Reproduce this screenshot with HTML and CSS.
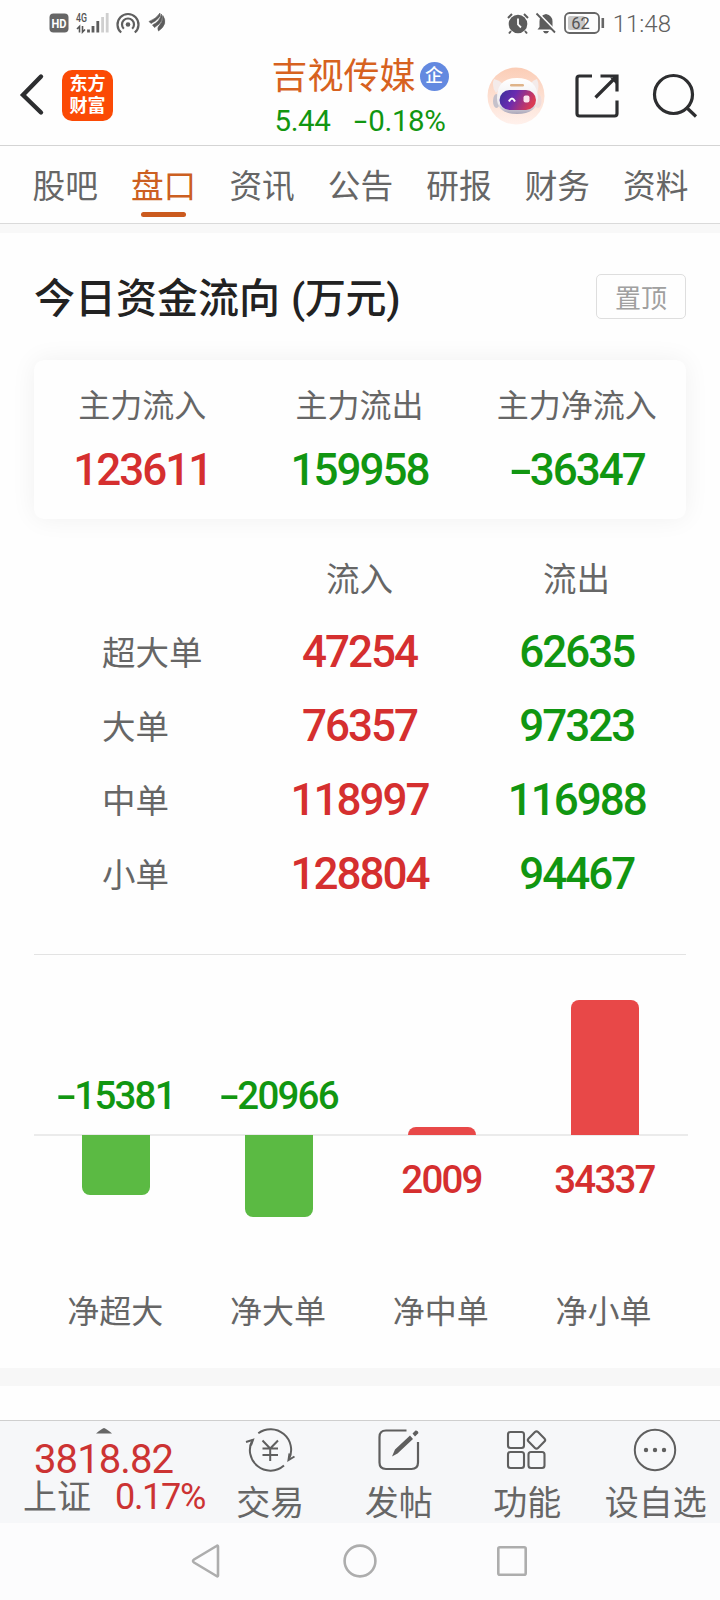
FILE: index.html
```html
<!DOCTYPE html>
<html lang="zh-CN">
<head>
<meta charset="utf-8">
<title>吉视传媒 - 盘口</title>
<link rel="stylesheet" href="styles.css">
</head>
<body>
<div class="app">
  <div class="statusbar">
    <div class="status-left">
      <svg class="ic-hd" width="20" height="20" viewBox="0 0 20 20"><rect x="0.5" y="0.5" width="19" height="19" rx="4" fill="#666"/><text x="10" y="14.5" text-anchor="middle" font-size="12" font-weight="700" textLength="15" lengthAdjust="spacingAndGlyphs" fill="#fff">HD</text></svg>
      <svg class="ic-signal" width="34" height="22" viewBox="0 0 34 22"><text x="0" y="9.500" font-size="12" font-weight="500" textLength="11" lengthAdjust="spacingAndGlyphs" fill="#555">4G</text><path d="M3.500 20.500V14.500L1 17M6.500 14V20L9 17.500" fill="none" stroke="#555" stroke-width="1.600"/><path d="M12.500 17.500v3M17 14v6.500M21.800 9v11.500" stroke="#5c5c5c" stroke-width="2.800"/><path d="M26.600 5v15.500M31.200 1v19.500" stroke="#cfcfcf" stroke-width="2.800"/></svg>
      <svg class="ic-hot" width="24" height="22" viewBox="0 0 24 22"><g fill="none" stroke="#5f5f5f" stroke-width="2.200"><path d="M5.200 20.500A10.500 10.500 0 1 1 18.800 20.500"/><path d="M7.800 16.800A6 6 0 1 1 16.200 16.800"/></g><circle cx="12" cy="12.500" r="2.300" fill="#5f5f5f"/></svg>
      <svg class="ic-wing" width="17" height="19" viewBox="0 0 17 19"><path d="M0 8.500Q7 6 11 0Q12.500 5 2 10.500ZM3.500 12Q11 8.500 12.300 1Q16 8 5.500 14.500ZM9.500 18Q7.500 15 11 11.500Q14 8 13.800 2.500Q19.500 11 9.500 18Z" fill="#5c5c5c" stroke="#5c5c5c" stroke-width="0.600"/></svg>
    </div>
    <div class="status-right">
      <svg width="22" height="21" viewBox="0 0 22 21"><circle cx="11" cy="11" r="9.300" fill="#5c5c5c"/><path d="M1 5L5 1M17 1l4 4M4 18l-2 2.500M18 18l2 2.500" stroke="#5c5c5c" stroke-width="2"/><path d="M11 5.500V11.500L14 14.500" fill="none" stroke="#fff" stroke-width="1.800"/></svg>
      <svg class="ic-bell" width="20" height="22" viewBox="0 0 20 22"><path d="M1.500 17.500L3.500 15V9.500Q3.500 3.500 10 2Q16.500 3.500 16.500 9.500V15L18.500 17.500ZM7 19h6q-1 2.500-3 2.500T7 19Z" fill="#5c5c5c"/><path d="M1.500 0.500L20 19.500" stroke="#fff" stroke-width="2"/><path d="M0.500 1.500L19 20.500" stroke="#5c5c5c" stroke-width="1.800"/></svg>
      <svg class="ic-bat" width="41" height="22" viewBox="0 0 41 22"><rect x="1" y="1" width="34" height="20" rx="4.500" fill="none" stroke="#666" stroke-width="1.800"/><rect x="4" y="4" width="17" height="14" rx="2" fill="#c9c9c9"/><path d="M38.800 6v10" stroke="#666" stroke-width="2.600"/><text x="16.500" y="16.700" text-anchor="middle" font-size="16.500" fill="#555">62</text></svg>
      <span class="clock">11:48</span>
    </div>
  </div>

  <header class="header">
    <div class="head-left">
      <svg width="24" height="42" viewBox="0 0 24 42"><path d="M21 2.500L3 21L21 38.500" fill="none" stroke="#2d2e30" stroke-width="4.400" stroke-linecap="round"/></svg>
      <div class="logo">东方<br>财富</div>
    </div>
    <div class="stock">
      <div class="stock-name">吉视传媒<span class="badge">企</span></div>
      <div class="stock-price"><span>5.44</span><span><i class="minus">-</i>0.18%</span></div>
    </div>
    <div class="head-right">
      <svg class="robot" width="58" height="58" viewBox="0 0 58 58">
        <defs>
          <linearGradient id="halo" x1="0" y1="0" x2="0" y2="1"><stop offset="0" stop-color="#fbcdb6"/><stop offset="1" stop-color="#fff1ec"/></linearGradient>
          <linearGradient id="visor" x1="0" y1="0" x2="1" y2="0.300"><stop offset="0" stop-color="#38309a"/><stop offset="0.450" stop-color="#6a2bb0"/><stop offset="1" stop-color="#d93a55"/></linearGradient>
          <linearGradient id="shell" x1="0" y1="0" x2="0" y2="1"><stop offset="0" stop-color="#fff"/><stop offset="0.700" stop-color="#eeecf0"/><stop offset="1" stop-color="#aaa6b8"/></linearGradient>
        </defs>
        <circle cx="29" cy="29" r="28.500" fill="url(#halo)"/>
        <path d="M7 12q5 1 9 5l-7 9q-5-7-2-14ZM50 12q-4 1-7 5l7 9q3-7 0-14Z" fill="#f4ebea"/>
        <ellipse cx="9.500" cy="34" rx="3.500" ry="7" fill="#c5c1cb"/><ellipse cx="51" cy="34" rx="3.500" ry="7" fill="#efdcdc"/>
        <path d="M10 31Q10 11 30 11T51 31Q50 47 30 47T10 31Z" fill="url(#shell)"/>
        <rect x="23" y="17" width="14" height="2.600" rx="1.300" fill="#dfb48a"/>
        <rect x="12.500" y="23" width="36.500" height="20" rx="10" fill="url(#visor)"/>
        <path d="M22 34.500q3-6 6 0" fill="none" stroke="#fff" stroke-width="2"/><rect x="36.500" y="28.500" width="6" height="7" rx="2" fill="#fbe3ee"/>
      </svg>
      <svg class="share" width="44" height="44" viewBox="0 0 44 44"><g fill="none" stroke="#2d2e30" stroke-width="3.200"><path d="M17 2H4.500Q2 2 2 4.500V39.500Q2 42 4.500 42H39.500Q42 42 42 39.500V26.500"/><path d="M25.500 2H42V17.500M41 3L20.500 23.500"/></g><path d="M35 3.500H41V10Z" fill="#2d2e30"/></svg>
      <svg class="search" width="46" height="46" viewBox="0 0 46 46"><g fill="none" stroke="#2d2e30" stroke-width="3.200"><circle cx="21.500" cy="21.500" r="19"/><path d="M34.500 34.500L44 43.500"/></g></svg>
    </div>
  </header>

  <nav class="tabs">
    <span class="tab">股吧</span><span class="tab active">盘口</span><span class="tab">资讯</span><span class="tab">公告</span><span class="tab">研报</span><span class="tab">财务</span><span class="tab">资料</span>
  </nav>

  <main class="panel">
    <div class="panel-head">
      <h1>今日资金流向<span class="unit">(万元)</span></h1>
      <button class="pin">置顶</button>
    </div>
    <section class="summary">
      <div><span class="label">主力流入</span><span class="num up">123611</span></div>
      <div><span class="label">主力流出</span><span class="num down">159958</span></div>
      <div><span class="label">主力净流入</span><span class="num down"><i class="minus">-</i>36347</span></div>
    </section>
    <section class="flows">
      <div class="row row-head"><span></span><span>流入</span><span>流出</span></div>
      <div class="row"><span class="name">超大单</span><span class="num up">47254</span><span class="num down">62635</span></div>
      <div class="row"><span class="name">大单</span><span class="num up">76357</span><span class="num down">97323</span></div>
      <div class="row"><span class="name">中单</span><span class="num up">118997</span><span class="num down">116988</span></div>
      <div class="row"><span class="name">小单</span><span class="num up">128804</span><span class="num down">94467</span></div>
    </section>
    <section class="chart">
      <div class="plot">
        <div class="col neg"><span class="val down"><i class="minus">-</i>15381</span><div class="bar" style="height:60px"></div></div>
        <div class="col neg"><span class="val down"><i class="minus">-</i>20966</span><div class="bar" style="height:82px"></div></div>
        <div class="col pos"><div class="bar" style="height:8px"></div><span class="val up">2009</span></div>
        <div class="col pos"><div class="bar" style="height:135px"></div><span class="val up">34337</span></div>
      </div>
      <div class="names"><span>净超大</span><span>净大单</span><span>净中单</span><span>净小单</span></div>
    </section>
  </main>

  <footer class="toolbar">
    <div class="index">
      <svg class="caret" width="16" height="6" viewBox="0 0 16 6"><path d="M0 5.500Q5 1 8 0Q11 1 16 5.500Z" fill="#666"/></svg>
      <div class="index-val">3818.82</div>
      <div class="index-row"><span>上证</span><span class="pct">0.17%</span></div>
    </div>
    <div class="tool">
      <svg width="50" height="44" viewBox="0 0 50 44"><g fill="none" stroke="#5f5f5f" stroke-width="2"><path d="M13.300 5.300A20.600 20.600 0 0 1 44 31M39 37.600A20.600 20.600 0 0 1 7.500 12"/><path d="M1 14L8 11.800L6 17.500M44.500 25.500L43.500 32L49.500 28.500"/><path d="M17.500 12.500L25.200 20.500L33 12.500M17.500 20.500H33M17.500 27H33M25.200 20.500V33"/></g></svg>
      <span>交易</span></div>
    <div class="tool">
      <svg width="44" height="44" viewBox="0 0 44 44"><path d="M29.500 2.500H9Q2.500 2.500 2.500 9V34.500Q2.500 41 9 41H34.500Q41 41 41 34.500V14" fill="none" stroke="#5f5f5f" stroke-width="2.200"/><path d="M15 28.500L18 21.500L33 7.500L36 11L20.500 25.500ZM35.500 5.500L38.500 2.500Q41 2 41.500 5L38 8.500Z" fill="#5f5f5f"/></svg>
      <span>发帖</span></div>
    <div class="tool">
      <svg width="44" height="44" viewBox="0 0 44 44"><g fill="none" stroke="#5f5f5f" stroke-width="2.100"><rect x="3" y="4" width="16" height="16" rx="2.500"/><rect x="3" y="24" width="16" height="16" rx="2.500"/><rect x="23.500" y="24" width="16" height="16" rx="2.500"/><rect x="-6.700" y="-6.700" width="13.400" height="13.400" rx="2.200" transform="translate(31.500 12) rotate(45)"/></g></svg>
      <span>功能</span></div>
    <div class="tool">
      <svg width="44" height="44" viewBox="0 0 44 44"><circle cx="21" cy="22" r="20.200" fill="none" stroke="#5f5f5f" stroke-width="2"/><g fill="#5f5f5f"><circle cx="12" cy="22" r="2.200"/><circle cx="21" cy="22" r="2.200"/><circle cx="30" cy="22" r="2.200"/></g></svg>
      <span>设自选</span></div>
  </footer>

  <div class="sysnav">
    <svg width="30" height="34" viewBox="0 0 30 34"><path d="M27 2.500V31.500Q27 33 25.500 32L3 18.500Q1 17 3 15.500L25.500 2Q27 1 27 2.500Z" fill="none" stroke="#adadad" stroke-width="2.600"/></svg>
    <svg width="34" height="34" viewBox="0 0 34 34"><circle cx="17" cy="17" r="15.400" fill="none" stroke="#adadad" stroke-width="2.600"/></svg>
    <svg width="30" height="30" viewBox="0 0 30 30"><rect x="1.300" y="1.300" width="27.400" height="27.400" rx="1.500" fill="none" stroke="#adadad" stroke-width="2.600"/></svg>
  </div>
</div>
</body>
</html>
```
FILE: styles.css
```css
* { box-sizing: border-box; }

body {
  margin: 0;
  background: #fefefe;
  font-family: Roboto, "Noto Sans CJK SC", sans-serif;
  color: #666;
}

svg { display: block; flex: none; overflow: visible; }

.app {
  width: 720px;
  height: 1600px;
  display: flex;
  flex-direction: column;
  overflow: hidden;
}

.up { color: #d52f2f; }
.down { color: #119611; }

/* status bar */
.statusbar {
  height: 46px;
  flex: none;
  display: flex;
  justify-content: space-between;
  align-items: center;
  padding: 0 49px 0 49px;
}
.status-left, .status-right { display: flex; align-items: center; }
.ic-signal { margin-left: 7px; }
.ic-hot { margin-left: 6px; }
.ic-wing { margin-left: 9px; margin-bottom: 2px; }
.ic-bell { margin-left: 7px; }
.ic-bat { margin-left: 8px; }
.clock { margin-left: 8px; padding-top: 1px; font-size: 24px; line-height: 46px; color: #606060; font-weight: 300; }

/* header */
.header {
  height: 100px;
  flex: none;
  border-bottom: 1px solid #d4d4d4;
  display: grid;
  grid-template-columns: 240px 240px 240px;
}
.head-left { display: flex; align-items: center; padding-left: 20px; gap: 18px; padding-bottom: 1px; }
.logo {
  width: 51px;
  height: 51px;
  padding-top: 3px;
  border-radius: 10px;
  background: #fb4a05;
  color: #fff;
  font-size: 18px;
  font-weight: 700;
  line-height: 22px;
  text-align: center;
}
.stock { display: flex; flex-direction: column; align-items: center; }
.stock-name {
  margin-top: 10px;
  height: 43px;
  line-height: 43px;
  font-size: 36px;
  color: #d7621f;
  display: flex;
  align-items: center;
  white-space: nowrap;
}
.badge {
  width: 29px;
  height: 29px;
  margin-left: 4px;
  margin-bottom: 2px;
  border-radius: 50%;
  background: #6389e0;
  color: #fff;
  font-size: 18px;
  font-weight: 500;
  line-height: 28px;
  text-align: center;
}
.stock-price {
  display: flex;
  gap: 24px;
  font-size: 29.5px;
  line-height: 44px;
  color: #119611;
  letter-spacing: -0.4px;
}
.head-right { display: flex; align-items: center; padding-left: 7px; }
.share { margin-left: 30px; }
.search { margin-left: 33px; }

/* tabs */
.tabs {
  height: 78px;
  flex: none;
  border-bottom: 1px solid #dadada;
  display: grid;
  grid-template-columns: repeat(7, 1fr);
  padding: 0 15px 0 16px;
}
.tab {
  display: flex;
  flex-direction: column;
  align-items: center;
  padding-top: 2px;
  font-size: 32.7px;
  line-height: 78px;
  height: 77px;
}
.active { color: #cc5f21; }
.active::after {
  content: "";
  width: 45px;
  height: 5px;
  margin-top: -14px;
  border-radius: 3px;
  background: #cb5a1e;
}

/* fund flow panel */
.panel {
  height: 1162px;
  flex: none;
  border-top: 9px solid #f8f8f8;
  border-bottom: 18px solid #f7f7f7;
  padding: 0 34px;
}
.panel-head {
  height: 127px;
  display: flex;
  align-items: center;
  justify-content: space-between;
}
h1 { margin: 0; padding-top: 5px; font-size: 41px; font-weight: 500; line-height: 60px; color: #222; }
.unit { margin-left: 11px; letter-spacing: -0.3px; }
.pin {
  width: 90px;
  height: 45px;
  padding: 0;
  border: 1px solid #dedede;
  border-radius: 5px;
  background: none;
  font: 26px/40px "Noto Sans CJK SC", sans-serif;
  color: #a0a0a0;
}
.summary {
  height: 159px;
  border-radius: 10px;
  background: #fefefe;
  box-shadow: 0 0 26px rgba(0, 0, 0, 0.06);
  display: grid;
  grid-template-columns: repeat(3, 1fr);
}
.summary > div { display: flex; flex-direction: column; align-items: center; padding: 24px 1px 0 0; }
.label { font-size: 32px; line-height: 44px; }
.num { font-size: 44px; font-weight: 500; line-height: 74px; letter-spacing: -2px; text-align: center; }
.summary .num { margin-top: 5px; }
.minus {
  display: inline-block;
  width: 0.47em;
  font-style: normal;
  transform: scaleX(1.6);
  transform-origin: 0 50%;
  text-align: left;
}
.flows { padding-top: 23px; }
.row { display: grid; grid-template-columns: repeat(3, 1fr); height: 74px; text-align: center; font-size: 33.5px; line-height: 76px; }
.row-head { padding-right: 1px; }
.row .num { line-height: 73px; padding-right: 1px; }
.name { text-align: left; padding-left: 68px; }

/* net flow chart */
.chart { margin-top: 42px; border-top: 1px solid #e3e3e3; }
.plot {
  height: 313px;
  display: grid;
  grid-template-columns: repeat(4, 1fr);
  margin-right: -2px;
  padding-right: 2px;
  background: linear-gradient(#ebebeb, #ebebeb) 0 179px / 100% 2px no-repeat;
}
.col { display: flex; flex-direction: column; align-items: center; }
.bar { width: 68px; flex: none; }
.neg .bar { background: #5bba43; border-radius: 0 0 8px 8px; }
.pos .bar { background: #e84848; border-radius: 8px 8px 0 0; }
.val { height: 60px; line-height: 60px; flex: none; font-size: 38.5px; font-weight: 500; letter-spacing: -1.8px; }
.neg { padding-top: 111px; }
.neg .val { margin-bottom: 9px; }
.pos { height: 255px; justify-content: flex-end; }
.pos .val { margin-top: 15px; }
.names { display: grid; grid-template-columns: repeat(4, 1fr); text-align: center; font-size: 32px; line-height: 88px; padding-right: 1px; }

/* bottom toolbar */
.toolbar {
  margin-top: 34px;
  height: 103px;
  flex: none;
  border-top: 1px solid #cfcfcf;
  background: #f6f7f9;
  display: grid;
  grid-template-columns: 206px repeat(4, 128.5px);
}
.index { padding-left: 23px; }
.caret { margin: 7px 0 0 73px; }
.index-val { margin-left: 11px; padding-top: 2px; font-size: 40px; line-height: 48px; letter-spacing: -0.9px; color: #cc3333; }
.index-row { display: flex; align-items: center; gap: 24px; margin-top: -5px; font-size: 34px; line-height: 36px; white-space: nowrap; }
.pct { font-size: 36px; letter-spacing: -1.3px; color: #cc3333; }
.tool { display: flex; flex-direction: column; align-items: center; padding-top: 7px; font-size: 34px; line-height: 62px; white-space: nowrap; }

/* system navigation */
.sysnav {
  flex: 1;
  background: #fcfcfd;
  display: flex;
  align-items: center;
  padding: 0 0 2px 191px;
}
.sysnav svg:nth-child(2) { margin-left: 122px; }
.sysnav svg:nth-child(3) { margin-left: 120px; }
```
